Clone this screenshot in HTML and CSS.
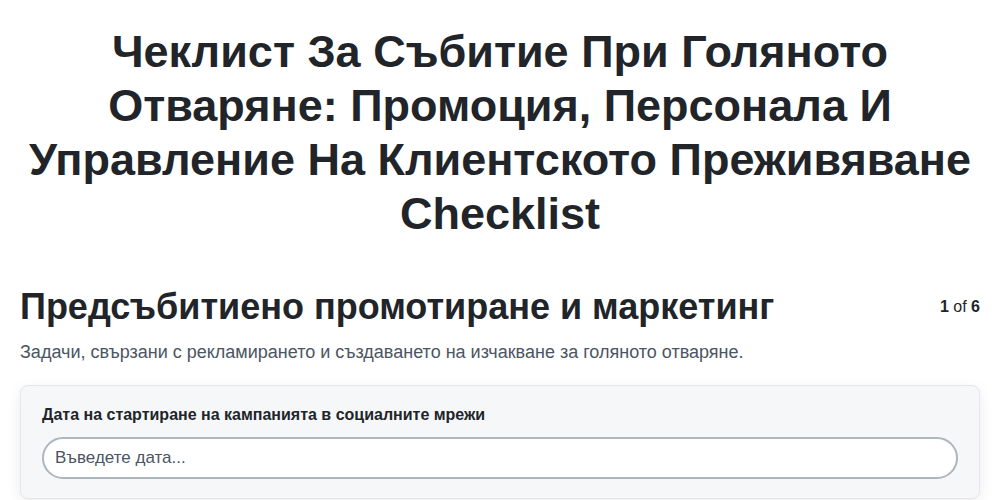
FILE: index.html
```html
<!DOCTYPE html>
<html lang="bg">
<head>
<meta charset="utf-8">
<title>Checklist</title>
<link rel="stylesheet" href="styles.css">
</head>
<body>
<div class="page">
  <h1 class="title">Чеклист За Събитие При Голяното Отваряне: Промоция, Персонала И Управление На Клиентското Преживяване Checklist</h1>
  <section class="section">
    <div class="section-head">
      <h2 class="section-title">Предсъбитиено промотиране и маркетинг</h2>
      <div class="counter"><b>1</b> of <b>6</b></div>
    </div>
    <p class="section-desc">Задачи, свързани с рекламирането и създаването на изчакване за голяното отваряне.</p>
    <div class="card">
      <label class="field-label" for="d1">Дата на стартиране на кампанията в социалните мрежи</label>
      <input class="field-input" id="d1" type="text" placeholder="Въведете дата...">
    </div>
  </section>
</div>
</body>
</html>
```
FILE: styles.css
```css
* { box-sizing: border-box; }
body {
  margin: 0;
  background: #ffffff;
  font-family: "Liberation Sans", Arial, sans-serif;
  color: #212529;
}
.page {
  padding: 25px 20px 20px;
}
.title {
  margin: 0;
  text-align: center;
  font-size: 45px;
  line-height: 54px;
  font-weight: 700;
  color: #212529;
}
.section {
  margin-top: 44px;
}
.section-head {
  display: flex;
  justify-content: space-between;
  align-items: flex-start;
}
.section-title {
  margin: 0;
  font-size: 36px;
  line-height: 44px;
  font-weight: 700;
  color: #212529;
}
.counter {
  font-size: 16px;
  line-height: 20px;
  padding-top: 12px;
  color: #212529;
}
.section-desc {
  margin: 11px 0 0;
  font-size: 18px;
  line-height: 24px;
  color: #4b5563;
}
.card {
  margin-top: 21px;
  background: #f6f7f9;
  border: 1px solid #e5e7eb;
  border-radius: 8px;
  box-shadow: 0 4px 14px rgba(0, 0, 0, 0.08);
  padding: 19px 21px;
}
.field-label {
  display: block;
  font-size: 16px;
  line-height: 20px;
  font-weight: 700;
  color: #212529;
  margin-bottom: 12px;
}
.field-input {
  display: block;
  width: 100%;
  height: 42px;
  border: 2px solid #adb5bd;
  border-radius: 21px;
  background: #ffffff;
  padding: 0 11px;
  font-family: "Liberation Sans", Arial, sans-serif;
  font-size: 17px;
  color: #212529;
}
.field-input::placeholder {
  color: #4b5563;
  opacity: 1;
}
```
